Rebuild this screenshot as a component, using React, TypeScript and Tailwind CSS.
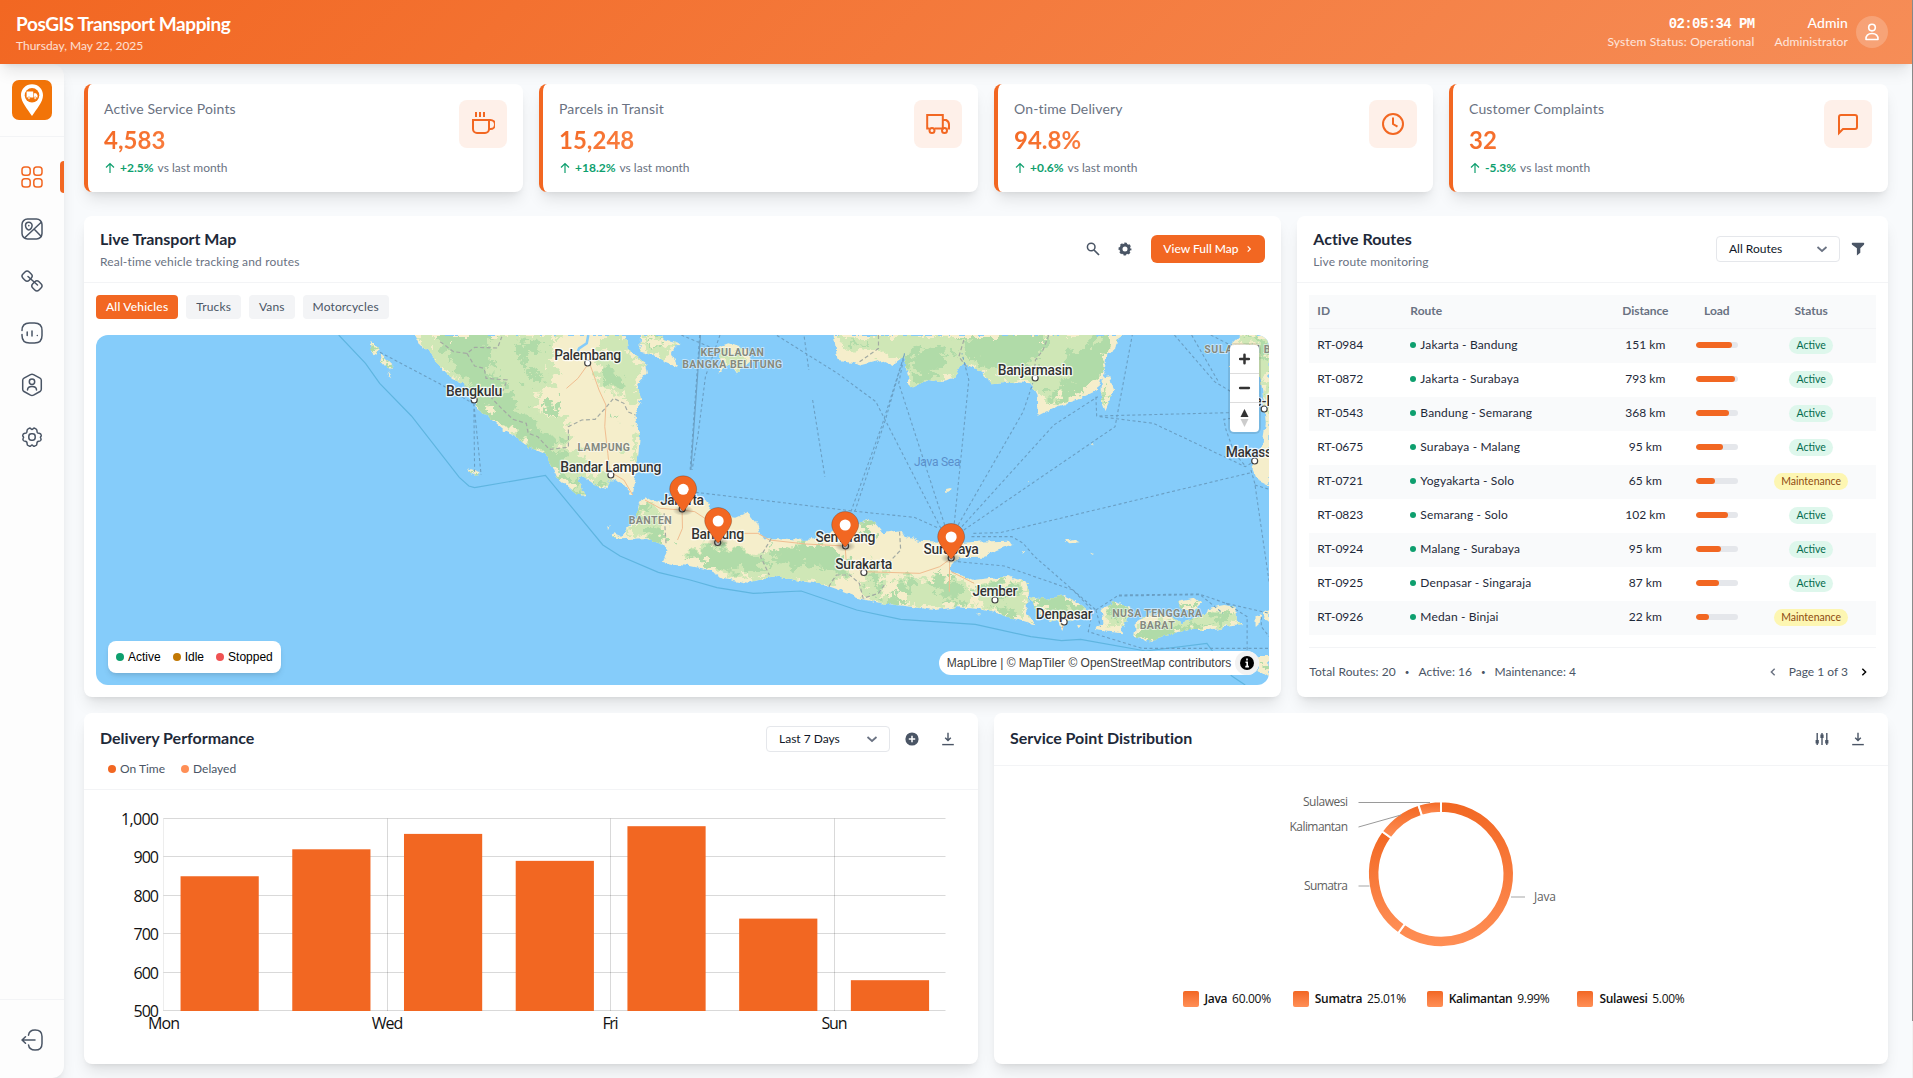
import React from "react";

const Stroke = ({ children, className = "size-6", w = 1.5 }: { children: React.ReactNode; className?: string; w?: number }) => (
  <svg viewBox="0 0 24 24" className={className} fill="none" stroke="currentColor" strokeWidth={w} strokeLinecap="round" strokeLinejoin="round">
    {children}
  </svg>
);

/* ---------- sidebar icons ---------- */

const GridIcon = () => (
  <Stroke>
    <rect x="2" y="2" width="8.2" height="8.2" rx="2.8" />
    <rect x="13.8" y="2" width="8.2" height="8.2" rx="2.8" />
    <rect x="2" y="13.8" width="8.2" height="8.2" rx="2.8" />
    <rect x="13.8" y="13.8" width="8.2" height="8.2" rx="2.8" />
  </Stroke>
);

const MapIcon = () => (
  <Stroke>
    <rect x="2" y="2" width="20" height="20" rx="5.5" />
    <path d="M12.1 8.6c0 2-1.7 4.3-3.3 4.3s-3.3-2.3-3.3-4.3a3.3 3.3 0 0 1 6.6 0z" />
    <path d="M8.8 8.6v.1M21 5.5 5 20.5M14.3 12.2l7 7.3" />
  </Stroke>
);

const LinkIcon = () => (
  <Stroke>
    <rect x="2.7" y="2.7" width="8.8" height="8.8" rx="3" transform="rotate(45 7.1 7.1)" />
    <rect x="12.5" y="12.5" width="8.8" height="8.8" rx="3" transform="rotate(45 16.9 16.9)" />
    <path d="M8 7.5l9.5 8.5" />
  </Stroke>
);

const ReportIcon = () => (
  <Stroke>
    <path d="M2 9.5C2 4 4.5 2 9.5 2h5C20 2 22 4.5 22 9.5v5c0 5-2 7.5-7.5 7.5h-5C4.5 22 2 20 2 14.5v-1" />
    <path d="M7.2 11v3.5M12 10v5M17.3 14.4v.1" />
  </Stroke>
);

const AccountIcon = () => (
  <Stroke>
    <path d="M13.5 1.7l6.5 3.5c.9.5 1.3 1.2 1.3 2.1v9c0 1-.5 1.7-1.3 2.2l-6.5 3.7c-1 .5-2 .5-3 0L4 18.5c-.9-.5-1.3-1.2-1.3-2.2v-9c0-1 .4-1.6 1.3-2.1l6.5-3.5c1-.5 2-.5 3 0z" />
    <circle cx="12" cy="8.7" r="2.7" />
    <path d="M7.5 17c0-2.3 2-3.6 4.5-3.6s4.5 1.3 4.5 3.6" />
  </Stroke>
);

const GearIcon = () => (
  <Stroke>
    <path d="M14.5 3.2l1.7.9c1.3.7.4 2.3 1.2 3.5.8 1.1 2.7.3 3.4 1.6.3.6.9 1.3.3 2-.8.9-1.3.9-.2 2.3.6.7 0 1.4-.3 2-.7 1.3-2.5.4-3.3 1.5-.8 1.2.1 2.7-1.2 3.4l-1.6.8c-1.1.5-1.5-1.2-2.5-1.2s-1.4 1.7-2.5 1.2l-1.6-.8c-1.3-.7-.4-2.2-1.2-3.4-.8-1.1-2.6-.2-3.3-1.5-.3-.6-.9-1.3-.3-2 1.1-1.4.6-1.4-.2-2.3-.6-.7 0-1.4.3-2 .7-1.3 2.6-.5 3.4-1.6.8-1.2-.1-2.8 1.2-3.5l1.7-.9c1.1-.5 1.5 1.2 2.5 1.2s1.4-1.7 2.5-1.2z" />
    <rect x="8.8" y="8.8" width="6.4" height="6.4" rx="2.6" />
  </Stroke>
);

const LogoutIcon = () => (
  <Stroke>
    <path d="M8.5 7.2C9 3.6 10.8 2 15 2h.2C20 2 22 3.9 22 8.6v6.8c0 4.7-2 6.6-6.8 6.6H15c-4.2 0-6-1.6-6.5-5.1" />
    <path d="M15 12H2.5M5.5 8.7L2 12l3.5 3.3" />
  </Stroke>
);

const UserIcon = () => (
  <Stroke w={1.6}>
    <circle cx="12" cy="7.6" r="3.3" />
    <path d="M6 19.5c-.4-3.7 2-6 6-6s6.4 2.3 6 6z" />
  </Stroke>
);

/* ---------- stat icons ---------- */

const Sharp = ({ children }: { children: React.ReactNode }) => (
  <svg viewBox="0 0 24 24" className="size-6" fill="none" stroke="currentColor" strokeWidth="2">
    {children}
  </svg>
);
const CupIcon = () => (
  <Sharp>
    <path d="M5 0v5M9 0v5M13 0v5" />
    <path d="M2 8h16v9a4 4 0 0 1-4 4H6a4 4 0 0 1-4-4z" />
    <path d="M18 8h1.5a3.5 3.5 0 0 1 0 9H18" />
  </Sharp>
);
const TruckIcon = () => (
  <Sharp>
    <path d="M3.5 16.5H1.2V3h15.6v13.5H8.5M16.8 8h3.2c2 1 3 2.5 3 4.5v4h-1.5M16.5 16.5h-1" />
    <circle cx="6" cy="18.5" r="2.5" />
    <circle cx="18.5" cy="18.5" r="2.5" />
  </Sharp>
);
const ClockIcon = () => (
  <Sharp>
    <circle cx="12" cy="12" r="10" />
    <path d="M12 5.5V12l4.5 2.6" />
  </Sharp>
);
const MessageIcon = () => (
  <Sharp>
    <path d="M21 15a2 2 0 0 1-2 2H7l-4 4V5a2 2 0 0 1 2-2h14a2 2 0 0 1 2 2z" />
  </Sharp>
);

/* ---------- toolbar icons ---------- */

const IconButton = ({ children }: { children: React.ReactNode }) => (
  <button className="flex size-7 items-center justify-center rounded text-gray-600">{children}</button>
);
const Solid = ({ children }: { children: React.ReactNode }) => (
  <svg viewBox="0 0 16 16" className="size-4" fill="none" stroke="currentColor">
    {children}
  </svg>
);
const SearchIcon = () => (
  <Solid>
    <circle cx="6.2" cy="6" r="3.8" strokeWidth="1.5" />
    <path d="M9 9l5 5" strokeWidth="1.7" />
  </Solid>
);
const CogIcon = () => (
  <Solid>
    <circle cx="8" cy="8" r="4" strokeWidth="3" />
    <circle cx="8" cy="8" r="5.7" strokeWidth="1.5" strokeDasharray="2.6 1.877" strokeDashoffset="1.3" />
  </Solid>
);
const FunnelIcon = () => (
  <Solid>
    <path d="M2.5 1.8h11c1 0 .8 1.5.4 2l-3.6 3.5v4.5L6.9 14.5V7.3L2.1 3.8c-.4-.5-.6-2 .4-2z" fill="currentColor" stroke="none" />
  </Solid>
);
const PlusCircleIcon = () => (
  <Solid>
    <circle cx="8" cy="8" r="6.6" fill="currentColor" stroke="none" />
    <path d="M8 4.8v6.4M4.8 8h6.4" stroke="#fff" strokeWidth="1.5" />
  </Solid>
);
const DownloadIcon = () => (
  <Solid>
    <path d="M8 1.8v7.5M5.2 6.7L8 9.5l2.8-2.8" strokeWidth="1.4" />
    <path d="M2.2 13.6h11.6" strokeWidth="1.4" />
  </Solid>
);
const SlidersIcon = () => (
  <Solid>
    <path d="M3.2 2v12M8 2v12M12.8 2v12" strokeWidth="1.4" />
    <path d="M3.2 9v3.5M8 3.5V7M12.8 9v3.5" strokeWidth="3.2" />
  </Solid>
);
const Chevron = ({ d, className }: { d: string; className: string }) => (
  <svg viewBox="0 0 12 12" className={className} fill="none" stroke="currentColor" strokeWidth="1.7">
    <path d={d} />
  </svg>
);

const Select = ({ label }: { label: string }) => (
  <div className="flex h-[26px] w-[124px] items-center justify-between rounded border border-gray-200 bg-white pr-[11px] pl-3 text-xs text-gray-900">
    {label}
    <Chevron d="M1.5 4l4.5 4 4.5-4" className="size-3 text-gray-500" />
  </div>
);

/* ---------- layout pieces ---------- */

const Header = () => (
  <header className="relative z-20 flex h-16 shrink-0 items-center justify-between bg-[linear-gradient(135deg,#f26722,#f68d57)] pr-6 pl-4 text-white shadow-lg">
    <div>
      <h1 className="text-[19px] leading-7 font-bold tracking-[-0.42px]">PosGIS Transport Mapping</h1>
      <p className="text-xs leading-4 text-white/80">Thursday, May 22, 2025</p>
    </div>
    <div className="flex items-center gap-5">
      <div className="text-right">
        <p className="font-['Liberation_Mono',monospace] text-sm leading-5 font-bold tracking-[-0.6px]">02:05:34 PM</p>
        <p className="text-xs leading-4 tracking-[0.2px] text-white/80">System Status: Operational</p>
      </div>
      <div className="flex items-center gap-2">
        <div className="text-right">
          <p className="pb-0.5 text-sm leading-[18px] font-medium tracking-[0.1px]">Admin</p>
          <p className="text-xs leading-4 tracking-[0.1px] text-white/80">Administrator</p>
        </div>
        <div className="flex size-8 items-center justify-center rounded-full bg-white/20">
          <UserIcon />
        </div>
      </div>
    </div>
  </header>
);

const Logo = () => (
  <svg viewBox="0 0 40 40" className="size-10">
    <rect width="40" height="40" rx="7" fill="#f27408" />
    <path d="M20 4.2c-6.3 0-11 4.8-11 11C9 22 15.5 29 20 36c4.5-7 11-14 11-20.8 0-6.2-4.7-11-11-11z" fill="#fff" />
    <circle cx="20" cy="15.3" r="7.3" fill="#f27408" />
    <path d="M14.6 11.5h6.6v6h-6.6zM21.8 13.2h2.3l1.4 2v2.3h-3.7z" fill="#fff" />
    <circle cx="17" cy="18" r="1.2" fill="#fff" stroke="#f27408" strokeWidth=".5" />
    <circle cx="23.2" cy="18" r="1.2" fill="#fff" stroke="#f27408" strokeWidth=".5" />
  </svg>
);

const Sidebar = () => (
  <aside className="z-10 flex w-16 shrink-0 flex-col rounded-r-xl bg-[#fdfdfd] text-gray-600 shadow-lg">
    <div className="flex h-[73px] items-center justify-center border-b border-gray-100 pb-px">
      <Logo />
    </div>
    <nav className="flex flex-1 flex-col gap-5 pt-6">
      <div className="flex h-8 items-center justify-between pl-5 text-[#f26722]">
        <GridIcon />
        <span className="h-8 w-1 rounded-l bg-[#f26722]" />
      </div>
      <div className="flex h-8 items-center pl-5"><MapIcon /></div>
      <div className="flex h-8 items-center pl-5"><LinkIcon /></div>
      <div className="flex h-8 items-center pl-5"><ReportIcon /></div>
      <div className="flex h-8 items-center pl-5"><AccountIcon /></div>
      <div className="flex h-8 items-center pl-5"><GearIcon /></div>
    </nav>
    <div className="flex h-[79px] items-center justify-center border-t border-gray-100 pt-0.5">
      <LogoutIcon />
    </div>
  </aside>
);

const stats = [
  { label: "Active Service Points", value: "4,583", change: "+2.5%", icon: <CupIcon /> },
  { label: "Parcels in Transit", value: "15,248", change: "+18.2%", icon: <TruckIcon /> },
  { label: "On-time Delivery", value: "94.8%", change: "+0.6%", icon: <ClockIcon /> },
  { label: "Customer Complaints", value: "32", change: "-5.3%", icon: <MessageIcon /> },
];

const StatCard = ({ label, value, change, icon }: (typeof stats)[number]) => (
  <div className="flex h-[108px] items-start justify-between rounded-lg border-l-4 border-[#f26722] bg-white p-4 shadow-lg">
    <div>
      <p className="pb-0.5 text-sm leading-[18px] tracking-[0.15px] text-gray-500">{label}</p>
      <p className="mt-1 bg-[linear-gradient(135deg,#f26722,#ff8f56)] bg-clip-text text-2xl leading-8 font-bold text-transparent">{value}</p>
      <p className="mt-1 flex items-center text-xs leading-4 text-gray-500">
        <svg viewBox="0 0 12 12" className="mr-1 size-3 text-[#0e9f6e]" fill="none" stroke="currentColor" strokeWidth="1.2">
          <path d="M6 11V1.5M2 5.5l4-4 4 4" />
        </svg>
        <span className="mr-1 font-bold text-[#0e9f6e]">{change}</span>
        vs last month
      </p>
    </div>
    <div className="flex size-12 items-center justify-center rounded-lg bg-[#fef0e9] text-[#f26722]">{icon}</div>
  </div>
);

const Title = ({ children }: { children: React.ReactNode }) => (
  <h2 className="pb-0.5 text-base leading-[22px] font-bold tracking-[-0.02px] text-gray-800">{children}</h2>
);

/* ---------- map ---------- */

const SEA = "#85ccfa";
const LAND =
  "M848 45L862 75 890 95 905 130 930 160 950 178 975 190 1003 235 1010 265 1040 290 1085 335 1110 348 1145 380 1185 400 1205 430 1220 470 1245 495 1270 520 1292 530 1285 500 1275 475 1290 470 1320 495 1350 508 1352 490 1365 475 1390 488 1418 525 1425 480 1433 400 1437 340 1425 290 1440 240 1430 190 1455 160 1450 130 1430 110 1405 90 1400 45Z" +
  "M1440 45L1438 95 1470 105 1500 125 1535 142 1518 100 1540 72 1500 60 1485 45Z" +
  "M732 60L758 90 740 106ZM757 100L790 135 788 150 778 145 760 120ZM778 150L790 172 782 165ZM988 445L1018 455 1014 468 992 456Z" +
  "M1643 80L1668 70 1718 90 1726 120 1690 160 1673 130 1643 158 1648 100Z" +
  "M1430 590L1430 560 1447 528 1465 540 1500 550 1540 548 1578 530 1603 540 1628 575 1658 585 1688 590 1718 575 1743 610 1755 655 1798 655 1868 660 1908 655 1948 625 2008 610 2028 598 2048 605 2073 640 2118 630 2128 650 2168 662 2218 665 2268 672 2308 665 2398 662 2413 672 2368 690 2338 710 2268 712 2250 735 2253 755 2308 780 2398 768 2453 790 2448 850 2446 880 2468 905 2472 916 2448 908 2368 880 2328 868 2268 862 2208 870 2128 858 2068 850 2018 838 1968 815 1918 795 1868 785 1798 770 1748 780 1718 788 1658 775 1618 750 1568 738 1530 735 1497 725 1510 690 1500 675 1450 655 1385 658 1360 645 1370 640 1390 650 1405 620 1428 590Z" +
  "M2453 832L2498 840 2543 825 2578 845 2608 875 2578 895 2548 905 2540 930 2530 905 2488 890 2463 850Z" +
  "M2643 870L2678 845 2718 860 2713 890 2698 920 2698 940 2658 935 2623 930 2628 920 2648 910Z" +
  "M2728 950L2733 905 2768 880 2818 885 2853 910 2868 900 2913 885 2918 865 2963 855 2993 860 2993 900 3013 915 2968 920 2923 930 2868 930 2808 945 2773 965ZM2843 845L2888 835 2903 850 2878 875 2848 865Z" +
  "M1943 45L1953 120 1988 125 2018 135 2068 120 2098 135 2128 110 2143 205 2188 180 2218 185 2258 175 2283 130 2328 155 2358 190 2398 185 2458 190 2473 225 2476 290 2528 260 2578 240 2633 210 2638 180 2653 160 2658 100 2678 90 2683 60 2703 45Z" +
  "M2643 170L2663 165 2673 215 2653 270 2643 240Z" +
  "M3008 45L2981 75 2978 140 3008 175 3058 170 3068 260 3072 310 3060 390 3035 440 3048 480 3081 498V45Z" +
  "M3055 1005H3081V1075L3050 1050ZM3045 885L3060 880 3055 915 3045 920ZM3066 880L3081 870V905L3070 900Z" +
  "M2234 508L2248 504 2246 518 2234 518ZM2548 662L2570 657 2588 667 2556 670ZM2610 698L2624 702 2616 704ZM2432 690L2444 692 2438 700ZM2318 880L2328 880 2322 884ZM2578 912L2590 918 2582 924ZM1348 620L1358 616 1354 626ZM2614 372L2620 374 2616 378ZM2448 480L2453 481 2450 484Z";

const LIGHT_GREEN =
  "M848 45H1225L1205 110 1225 190 1150 240 1190 290 1250 300 1240 370 1290 420 1310 470 1292 530 1270 520 1205 430 1085 335 1003 235 930 160Z" +
  "M1330 45H1400L1410 100 1450 130 1430 190 1437 250 1380 230 1320 190 1340 110Z M1300 470L1350 440 1355 508ZM1410 350L1437 330 1425 440 1405 420Z" +
  "M1440 50L1538 72 1500 110 1438 95ZM1643 80L1715 90 1690 150 1660 130Z" +
  "M1430 560H1480L1500 620 1510 675 1450 655 1405 640ZM1568 690L1640 670 1780 700 1840 665 1960 700 2000 760 1940 800 1868 785 1748 780 1640 760ZM2040 720L2080 750 2070 850 2010 830ZM2110 770L2290 770 2300 860 2130 858ZM2310 780L2453 790 2446 890 2320 868Z" +
  "M1943 45H2290L2330 150 2283 130 2258 175 2143 205 2120 110 2020 100 1960 80ZM2270 45H2660L2650 130 2560 240 2500 240 2470 190 2358 190ZM2643 170L2673 215 2653 250Z M2453 832L2608 875 2540 910Z M2643 870L2718 860 2700 920 2660 910ZM2728 950L2740 905 2800 890 2993 862 3013 915 2808 945Z M3008 45H3081V300L3040 160Z";

const GREEN =
  "M890 45H1060L1040 95 1060 160 1110 250 1160 300 1230 380 1250 450 1290 530 1250 495 1205 430 1145 372 1085 325 1020 262 1003 225 940 120Z" +
  "M1110 70L1180 55 1200 75 1150 95 1130 150ZM1335 150L1395 160 1400 200 1350 200ZM1200 240L1240 230 1230 270 1190 290ZM1140 150L1190 170 1150 190ZM1300 470L1350 490 1345 506ZM1350 280L1375 282 1365 295Z" +
  "M732 60L758 90 740 106ZM757 100L790 135 788 150 778 145ZM988 445L1018 455 1014 468ZM1360 640L1400 655 1380 658ZM1460 50L1490 60 1480 75Z" +
  "M1430 550L1458 545 1460 590 1430 590ZM1445 620L1500 625 1508 670 1460 655ZM1568 700L1630 680 1700 690 1770 720 1760 750 1690 755 1620 745ZM1780 690L1900 668 1970 700 1975 760 1935 770 1910 740 1800 735Z" +
  "M2015 605L2045 605 2045 650 2020 650ZM2112 780L2150 775 2152 805 2128 830 2108 800ZM2198 775L2248 765 2275 800 2262 835 2208 825ZM2308 800L2340 790 2430 790 2425 820 2368 830 2308 820ZM2348 862L2410 872 2405 900ZM2068 830L2128 835 2118 858 2068 850ZM2045 750L2070 780 2058 830 2040 800ZM2230 845L2300 848 2270 862Z" +
  "M2453 832L2498 840 2543 828 2600 870 2540 880 2470 860ZM2445 895L2472 916 2450 908ZM2648 870L2678 850 2715 865 2690 895 2660 890ZM2728 950L2735 925 2780 915 2850 925 2900 905 2930 915 2868 930 2773 965ZM2845 848L2880 838 2890 860 2850 862ZM2940 870L2985 865 2970 900 2930 910Z" +
  "M2143 90L2250 70 2240 120 2205 160 2160 200 2140 130ZM2278 45H2500L2470 130 2420 140 2358 160 2340 140 2300 110ZM2568 100L2628 60 2678 45 2658 90 2638 170 2568 235 2505 235 2548 180ZM1990 60L2040 70 2010 85ZM2648 180L2668 200 2655 245ZM3030 45L3081 70V140L3050 100ZM3070 200H3081V230H3070ZM3055 1040L3081 1030V1060Z";

const ROADS =
  "M1300 135L1275 175 1245 205M1307 135L1330 210 1348 255 1345 320 1353 400 1358 455 1395 480 1418 525M1003 240L1020 225M1450 540L1490 565 1545 570 1580 575 1640 620 1690 640 1745 640 1775 660 1870 672 1973 678M1547 570L1548 625 1535 660M1973 680L1976 730 2020 755 2168 760 2220 740 2250 715M2246 715L2245 815M2250 755L2310 790M2545 905L2540 925";

const BORDERS =
  "M915 65L950 95 985 100 1005 82 1065 84 1076 50M985 100L1005 138 1030 145 1035 175 1090 180 1080 210 1050 235 1075 265 1105 298 1140 310 1145 340 1170 350 1200 388 1250 382 1250 320 1285 300 1320 298 1350 260 1368 235 1395 250 1405 275 1425 285M1500 580L1505 670M1780 655L1752 710 1775 765M2115 635L2118 690 2085 730M1930 800L1950 765 1985 765 2010 790 2020 835 2060 820 2078 790M2060 45V85L2005 130M2283 60L2270 110 2290 140M2505 45L2490 90 2470 120 2465 185";

const FERRIES =
  "M758 97L920 195 1000 250M1003 250L1005 455M1003 250L1022 465" +
  "M2233 615L2113 190 2128 100M2223 625L2053 245 1953 160 1793 45M2258 610L2296 180 2278 100M2268 615L2438 275 2463 190M2278 620L2518 315 2633 230M2283 630L2678 320 2723 45M2308 640L2378 638 3033 458M2303 650L2408 650 2438 670 2468 710 2628 870M2268 725L2388 738 2568 810 2618 870" +
  "M1998 575L2078 300 2128 100M1988 575L2068 320 2126 110M1568 515L2008 575 2153 592 2218 625M2628 230L2630 288 2978 278M2638 290L2778 310 3018 440 3033 430M3033 450L3043 490 3081 790M3043 495L3081 508M1888 240L1920 470M1866 50L1878 150M1593 45L1568 450M1646 45L1608 170 1588 350 1573 450M1545 45L1638 90M2833 45L2938 185 2981 215M2878 45L2948 185M2928 45L2979 75M2981 295L2962 298 2968 330 2990 400 3020 440" +
  "M2628 870L2688 825 2898 822 2968 850 3081 880M2618 880L2608 935 2748 985 3081 985M2968 850L3023 890V1000M2688 828L2900 824 2960 880M3060 890L3060 920 3081 950M2628 870L2640 920";

const MARITIME =
  "M650 45L720 130 757 190 840 288 965 472 990 498 1005 503 1190 466 1340 675 1385 708 1485 757 1568 780 1638 803 1733 820 1858 813 2003 870 2118 898 2313 913 2458 950 2538 962 2588 958 2758 993 2918 970 2943 1010 2983 1068 3018 1095";

const cities = [
  { name: "Palembang", x: 491.5, y: 24.5, w: 67, dy: 28 },
  { name: "Bengkulu", x: 378, y: 61, w: 56.5, dy: 65 },
  { name: "Bandar Lampung", x: 514.7, y: 136.7, w: 101, dy: 140 },
  { name: "Jakarta", x: 586, y: 170, w: 44, dy: 174 },
  { name: "Bandung", x: 621.5, y: 204, w: 53, dy: 207.5 },
  { name: "Semarang", x: 749.4, y: 207, w: 60, dy: 211 },
  { name: "Surabaya", x: 855, y: 219, w: 55.5, dy: 223 },
  { name: "Surakarta", x: 767.7, y: 233.7, w: 57, dy: 237.5 },
  { name: "Jember", x: 898.8, y: 261, w: 45, dy: 265 },
  { name: "Denpasar", x: 968, y: 283.5, w: 57, dy: 287 },
  { name: "Banjarmasin", x: 939, y: 39.5, w: 75, dy: 43 },
  { name: "Makassar", x: 1158.5, y: 122, w: 58, dy: 126 },
  { name: "Pare-Pare", x: 1168, y: 70.5, w: 62, dy: 74 },
];

const regions = [
  { name: "LAMPUNG", x: 507.5, y: 115.7, w: 52.5 },
  { name: "BANTEN", x: 554, y: 189, w: 43 },
  { name: "KEPULAUAN", x: 636, y: 20.7, w: 63.5 },
  { name: "BANGKA BELITUNG", x: 636, y: 32.7, w: 100 },
  { name: "SULAWESI BARAT", x: 1156, y: 18, w: 96 },
  { name: "NUSA TENGGARA", x: 1061, y: 282, w: 90 },
  { name: "BARAT", x: 1061, y: 294, w: 35 },
];

const pins = [
  { x: 587, y: 154.3 },
  { x: 622, y: 186 },
  { x: 749, y: 190 },
  { x: 855, y: 202 },
];

const MapCanvas = () => (
  <>
    <svg viewBox="16 45 3065 1050" preserveAspectRatio="none" className="absolute inset-0 h-full w-full">
      <defs>
        <clipPath id="land-clip">
          <path d={LAND} />
        </clipPath>
        <filter id="coast" x="0" y="0" width="1" height="1">
          <feTurbulence type="fractalNoise" baseFrequency="0.05" numOctaves="3" seed="4" />
          <feDisplacementMap in="SourceGraphic" scale="16" xChannelSelector="R" yChannelSelector="G" />
        </filter>
        <filter id="patches" x="0" y="0" width="1" height="1">
          <feTurbulence type="fractalNoise" baseFrequency="0.035" numOctaves="4" seed="9" />
          <feDisplacementMap in="SourceGraphic" scale="85" xChannelSelector="R" yChannelSelector="G" />
        </filter>
      </defs>
      <rect x="16" y="45" width="3065" height="1050" fill={SEA} />
      <path d={MARITIME} fill="none" stroke="#5fb5e0" strokeWidth="1.2" vectorEffect="non-scaling-stroke" />
      <g filter="url(#coast)">
        <path d={LAND} fill="#f5eecb" />
        <g clipPath="url(#land-clip)">
          <path d={LIGHT_GREEN} fill="#cfe7b6" filter="url(#patches)" />
          <path d={GREEN} fill="#b0dba8" filter="url(#patches)" />
        </g>
      </g>
      <path d="M1302 45L1298 70 1278 85 1274 95" fill="none" stroke={SEA} strokeWidth="2.5" vectorEffect="non-scaling-stroke" />
      <path d={ROADS} fill="none" stroke="#f0bd90" strokeWidth="1" vectorEffect="non-scaling-stroke" />
      <path d={BORDERS} fill="none" stroke="#a3aaa3" strokeWidth="1.2" strokeDasharray="4 2.5" vectorEffect="non-scaling-stroke" />
      <path d={FERRIES} fill="none" stroke="#6a9fc4" strokeWidth="1.1" strokeDasharray="3 2.5" vectorEffect="non-scaling-stroke" />
      <path d="M1595 45L1570 450" fill="none" stroke="#6a9fc4" strokeWidth="1.1" vectorEffect="non-scaling-stroke" />
    </svg>
    <svg viewBox="0 0 1173 350" className="absolute inset-0 h-full w-full font-[Roboto,sans-serif]">
      <defs>
        <radialGradient id="pin-shadow">
          <stop offset="0" stopColor="#000" stopOpacity=".4" />
          <stop offset="1" stopColor="#000" stopOpacity="0" />
        </radialGradient>
      </defs>
      {regions.map((r) => (
        <text key={r.name} x={r.x} y={r.y} textAnchor="middle" textLength={r.w} className="fill-[#85897f] stroke-white/60 text-[10.5px] font-bold" strokeWidth="1.5" paintOrder="stroke">
          {r.name}
        </text>
      ))}
      <text x="841" y="131.3" textAnchor="middle" textLength="46.5" className="fill-[#5b8fca] text-[12px]">
        Java Sea
      </text>
      {cities.map((c) => (
        <g key={c.name}>
          <circle cx={c.x} cy={c.dy} r="3" fill="#fff" stroke="#444" strokeWidth="1.2" />
          <text x={c.x} y={c.y} textAnchor="middle" textLength={c.w} className="fill-[#333] stroke-white/80 text-[14px] font-medium" strokeWidth="2.4" strokeLinejoin="round" paintOrder="stroke">
            {c.name}
          </text>
        </g>
      ))}
      {pins.map((p) => (
        <g key={p.x} transform={`translate(${p.x - 13.5} ${p.y - 13.5})`}>
          <ellipse cx="13.5" cy="34.8" rx="10.5" ry="5.25" fill="url(#pin-shadow)" />
          <path
            d="M27,13.5C27,19.07 20.25,27 14.75,34.5C14.02,35.5 12.98,35.5 12.25,34.5C6.75,27 0,19.22 0,13.5C0,6.04 6.04,0 13.5,0C20.96,0 27,6.04 27,13.5Z"
            fill="#f26722"
            stroke="#000"
            strokeOpacity=".25"
            strokeWidth=".8"
          />
          <circle cx="13.5" cy="13.5" r="5.5" fill="#fff" />
        </g>
      ))}
    </svg>
  </>
);

const LegendDot = ({ color, label }: { color: string; label: string }) => (
  <span className="flex items-center gap-1">
    <span className={`size-2 rounded-full ${color}`} />
    {label}
  </span>
);

const filters = ["All Vehicles", "Trucks", "Vans", "Motorcycles"];

const MapCard = () => (
  <section className="col-span-8 flex flex-col rounded-lg bg-white shadow-lg">
    <div className="flex h-[67px] items-center justify-between border-b border-gray-100 px-4">
      <div>
        <Title>Live Transport Map</Title>
        <p className="mt-0.5 text-xs leading-4 tracking-[0.15px] text-gray-500">Real-time vehicle tracking and routes</p>
      </div>
      <div className="flex items-center gap-1">
        <IconButton><SearchIcon /></IconButton>
        <IconButton><CogIcon /></IconButton>
        <button className="ml-2 flex h-7 w-[114px] items-center rounded-md bg-[#f26722] pl-3 text-xs font-medium text-white">
          View Full Map
          <Chevron d="M4 2l4 4-4 4" className="ml-1.5 size-2" />
        </button>
      </div>
    </div>
    <div className="flex flex-col gap-4 p-3">
      <div className="flex gap-2">
        {filters.map((f, i) => (
          <button
            key={f}
            className={
              i === 0
                ? "h-6 rounded bg-[#f26722] px-2.5 text-xs font-medium tracking-[0.2px] text-white"
                : "h-6 rounded bg-gray-100 px-2.5 text-xs tracking-[0.13px] text-gray-600"
            }
          >
            {f}
          </button>
        ))}
      </div>
      <div className="relative h-[350px] overflow-hidden rounded-xl">
        <MapCanvas />
        <div className="absolute bottom-3 left-3 flex h-8 items-center gap-3 rounded-lg bg-white px-2 font-['Liberation_Sans',sans-serif] text-xs text-black shadow-md">
          <LegendDot color="bg-[#0e9f6e]" label="Active" />
          <LegendDot color="bg-[#c27803]" label="Idle" />
          <LegendDot color="bg-[#f05252]" label="Stopped" />
        </div>
        <div className="absolute right-2.5 bottom-2.5 flex h-6 items-center rounded-xl bg-white pl-2 font-['Liberation_Sans',sans-serif] text-xs text-[#404040]">
          MapLibre | © MapTiler © OpenStreetMap contributors
          <span className="ml-1 flex size-6 items-center justify-center rounded-full bg-[#f2f2f2]">
            <svg viewBox="0 0 14 14" className="size-3.5">
              <circle cx="7" cy="7" r="7" fill="#000" />
              <path d="M7 2.6v1.9M5.5 6.2h1.7v4M5.3 10.6h3.6" stroke="#fff" strokeWidth="1.6" fill="none" />
            </svg>
          </span>
        </div>
        <div className="absolute top-2.5 right-2.5 flex w-[29px] flex-col divide-y divide-[#ddd] rounded bg-white shadow-[0_0_0_2px_rgba(0,0,0,0.1)]">
          <svg viewBox="0 0 29 29" className="h-[29px] w-full"><path d="M14.5 10v9M10 14.5h9" stroke="#333" strokeWidth="2.6" strokeLinecap="round" /></svg>
          <svg viewBox="0 0 29 29" className="h-[29px] w-full"><path d="M10 14.5h9" stroke="#333" strokeWidth="2.6" strokeLinecap="round" /></svg>
          <svg viewBox="0 0 29 29" className="h-[29px] w-full">
            <path d="M10.5 14l4-8 4 8z" fill="#333" />
            <path d="M10.5 16l4 8 4-8z" fill="#ccc" />
          </svg>
        </div>
      </div>
    </div>
  </section>
);

/* ---------- routes ---------- */

const routes = [
  { id: "RT-0984", route: "Jakarta - Bandung", km: 151, load: 85, ok: true },
  { id: "RT-0872", route: "Jakarta - Surabaya", km: 793, load: 93, ok: true },
  { id: "RT-0543", route: "Bandung - Semarang", km: 368, load: 78, ok: true },
  { id: "RT-0675", route: "Surabaya - Malang", km: 95, load: 64, ok: true },
  { id: "RT-0721", route: "Yogyakarta - Solo", km: 65, load: 45, ok: false },
  { id: "RT-0823", route: "Semarang - Solo", km: 102, load: 76, ok: true },
  { id: "RT-0924", route: "Malang - Surabaya", km: 95, load: 60, ok: true },
  { id: "RT-0925", route: "Denpasar - Singaraja", km: 87, load: 55, ok: true },
  { id: "RT-0926", route: "Medan - Binjai", km: 22, load: 31, ok: false },
];

const COLS = "grid grid-cols-[93px_199px_72px_71px_1fr] items-center pl-2";

const RoutesCard = () => (
  <section className="col-span-4 rounded-lg bg-white shadow-lg">
    <div className="flex h-[67px] items-center justify-between border-b border-gray-100 px-4">
      <div>
        <Title>Active Routes</Title>
        <p className="mt-0.5 text-xs leading-4 tracking-[0.1px] text-gray-500">Live route monitoring</p>
      </div>
      <div className="flex items-center gap-1">
        <Select label="All Routes" />
        <IconButton><FunnelIcon /></IconButton>
      </div>
    </div>
    <div className="px-3 pt-3">
      <div className={`${COLS} h-[34px] border-b border-gray-100 bg-gray-50 pb-0.5 text-xs font-bold text-gray-500`}>
        <span>ID</span>
        <span>Route</span>
        <span className="text-center tracking-[-0.1px]">Distance</span>
        <span className="text-center">Load</span>
        <span className="pr-1.5 text-center">Status</span>
      </div>
      {routes.map((r, i) => (
        <div key={r.id} className={`${COLS} h-[34px] pb-0.5 text-xs text-gray-800 ${i % 2 === 0 ? "bg-gray-50" : "bg-white"}`}>
          <span>{r.id}</span>
          <span className="flex items-center tracking-[0.15px]">
            <span className="mr-1 size-1.5 rounded-full bg-[#0e9f6e]" />
            {r.route}
          </span>
          <span className="text-center tracking-[0.05px]">{r.km} km</span>
          <span className="mx-auto h-1.5 w-[42px] overflow-hidden rounded-full bg-gray-200">
            <span className="block h-full rounded-full bg-[#f26722]" style={{ width: `${r.load}%` }} />
          </span>
          <span className="flex justify-center pr-1.5">
            {r.ok ? (
              <span className="flex h-[17px] w-11 items-center justify-center rounded-full bg-[#def7ec] text-[10.5px] text-[#046c4e]">Active</span>
            ) : (
              <span className="flex h-[17px] w-[74px] items-center justify-center rounded-full bg-[#fdf6b2] text-[10.5px] text-[#8e4b10]">Maintenance</span>
            )}
          </span>
        </div>
      ))}
      <div className="mt-3 flex h-[50px] items-center justify-between border-t border-gray-100 pb-px text-xs text-gray-600">
        <div className="flex items-center">
          <span className="tracking-[0.1px]">Total Routes: 20</span>
          <span className="mx-[9px] text-[8px]">•</span>
          <span>Active: 16</span>
          <span className="mx-[9px] text-[8px]">•</span>
          <span>Maintenance: 4</span>
        </div>
        <div className="flex items-center gap-[11px] pr-[7px]">
          <Chevron d="M8 2L4 6l4 4" className="size-2.5 text-gray-500" />
          <span>Page 1 of 3</span>
          <Chevron d="M4 2l4 4-4 4" className="size-2.5 text-black" />
        </div>
      </div>
    </div>
  </section>
);

/* ---------- charts ---------- */

const bars = [850, 920, 960, 890, 980, 740, 580];
const STEP = 111.72;

const BarChart = () => (
  <svg viewBox="0 0 894 274" className="h-[274px] w-full font-['Open_Sans',sans-serif] text-[16px]">
    {[1000, 900, 800, 700, 600, 500].map((v) => {
      const y = Math.round(220.5 - ((v - 500) / 100) * 38.5 - 0.5) + 0.5;
      return (
        <g key={v}>
          <path d={`M79.5 ${y}H861.5`} stroke="#000" strokeOpacity=".15" />
          <text x="75" y={y + 6} textAnchor="end" textLength={v === 1000 ? 38 : 25.5} fill="#111">
            {v.toLocaleString("en-US")}
          </text>
        </g>
      );
    })}
    {["Mon", "Wed", "Fri", "Sun"].map((d, i) => {
      const x = Math.round(79.5 + i * 2 * STEP) + (i === 0 ? -0.5 : 0.5);
      return (
        <g key={d}>
          <path d={`M${x} 28.5V221`} stroke="#000" strokeOpacity={i === 0 ? 0.07 : 0.15} />
          <text x={i === 0 ? x + 0.5 : x} y="239" textAnchor="middle" textLength={[32, 31.5, 16, 26][i]} fill="#111">
            {d}
          </text>
        </g>
      );
    })}
    {bars.map((v, i) => {
      const h = ((v - 500) / 100) * 38.5;
      return <rect key={i} x={79.8 + i * STEP + 16.75} y={221 - h} width="78.2" height={h} fill="#f26722" />;
    })}
  </svg>
);

const polar = (r: number, deg: number) => {
  const a = ((deg - 90) * Math.PI) / 180;
  return `${(447 + r * Math.cos(a)).toFixed(2)} ${(108.2 + r * Math.sin(a)).toFixed(2)}`;
};
const ring = (a: number, b: number) => {
  const big = b - a > 180 ? 1 : 0;
  return `M${polar(73, a)}A73 73 0 ${big} 1 ${polar(73, b)}L${polar(61.5, b)}A61.5 61.5 0 ${big} 0 ${polar(61.5, a)}Z`;
};
const slices = [
  [0, 216],
  [216, 306.04],
  [306.04, 342],
  [342, 360],
];

const Donut = () => (
  <svg viewBox="0 0 894 225" className="h-[225px] w-full font-['Open_Sans',sans-serif] text-[12px]">
    <defs>
      <linearGradient id="slice" x1="0" y1="0" x2="0" y2="1">
        <stop offset="0" stopColor="#f26722" />
        <stop offset="1" stopColor="#ff8f56" />
      </linearGradient>
    </defs>
    {slices.map(([a, b]) => (
      <path key={a} d={ring(a, b)} fill="url(#slice)" stroke="#fff" strokeWidth="2" />
    ))}
    <g fill="none" stroke="#9a9a9a">
      <path d="M364.5 36.5H436M364.5 61L407 49" />
      <path d="M364.5 120H375.5M517 131H531" stroke="#c4c4c4" strokeWidth="1.5" />
    </g>
    <g fill="#5f5f5f">
      <text x="354" y="40" textAnchor="end" textLength="45">Sulawesi</text>
      <text x="354" y="65" textAnchor="end" textLength="58.5">Kalimantan</text>
      <text x="354" y="124" textAnchor="end" textLength="44">Sumatra</text>
      <text x="540" y="135" textLength="22">Java</text>
    </g>
  </svg>
);

const shares = [
  { name: "Java", pct: "60.00%", gap: "mr-[22px]" },
  { name: "Sumatra", pct: "25.01%", gap: "mr-[21px]" },
  { name: "Kalimantan", pct: "9.99%", gap: "mr-[28px]" },
  { name: "Sulawesi", pct: "5.00%", gap: "mr-[15px]" },
];

const DeliveryCard = () => (
  <section className="h-[351px] rounded-lg bg-white shadow-lg">
    <div className="border-b border-gray-100 px-4 py-3">
      <div className="flex items-center justify-between">
        <Title>Delivery Performance</Title>
        <div className="flex items-center gap-2">
          <Select label="Last 7 Days" />
          <IconButton><PlusCircleIcon /></IconButton>
          <IconButton><DownloadIcon /></IconButton>
        </div>
      </div>
      <div className="mt-2 flex gap-4 pl-2 text-xs leading-4 text-gray-600">
        <LegendDot color="bg-[#f26722]" label="On Time" />
        <LegendDot color="bg-[#ff8f56]" label="Delayed" />
      </div>
    </div>
    <BarChart />
  </section>
);

const DistributionCard = () => (
  <section className="h-[351px] rounded-lg bg-white shadow-lg">
    <div className="flex items-center justify-between border-b border-gray-100 px-4 py-3">
      <Title>Service Point Distribution</Title>
      <div className="flex items-center gap-2">
        <IconButton><SlidersIcon /></IconButton>
        <IconButton><DownloadIcon /></IconButton>
      </div>
    </div>
    <Donut />
    <div className="flex justify-center font-['Open_Sans',sans-serif] text-[12px] leading-4 text-[#111]">
      {shares.map((s) => (
        <div key={s.name} className={`flex items-center gap-1.5 ${s.gap}`}>
          <span className="size-4 rounded-[2px] bg-linear-to-b from-[#f26722] to-[#ff8f56]" />
          <span className="tracking-[-0.3px]">
            <b className="mr-0.5 font-semibold">{s.name}</b> {s.pct}
          </span>
        </div>
      ))}
    </div>
  </section>
);

export default function App() {
  return (
    <div className="flex h-[1078px] w-full overflow-hidden bg-[#f8fafc] font-[Lato,sans-serif]">
      <div className="flex min-w-0 flex-1 flex-col">
        <Header />
        <div className="flex min-h-0 flex-1">
          <Sidebar />
          <main className="flex min-w-0 flex-1 flex-col pt-5 pr-6 pl-5">
            <div className="grid grid-cols-4 gap-4">
              {stats.map((s) => (
                <StatCard key={s.label} {...s} />
              ))}
            </div>
            <div className="mt-6 grid h-[481px] shrink-0 grid-cols-12 gap-4">
              <MapCard />
              <RoutesCard />
            </div>
            <div className="mt-4 grid grid-cols-2 gap-4">
              <DeliveryCard />
              <DistributionCard />
            </div>
          </main>
        </div>
      </div>
      <div className="w-px bg-[#f1f1f1]">
        <div className="h-[1021px] w-px bg-[#8b8b8b]" />
      </div>
    </div>
  );
}
